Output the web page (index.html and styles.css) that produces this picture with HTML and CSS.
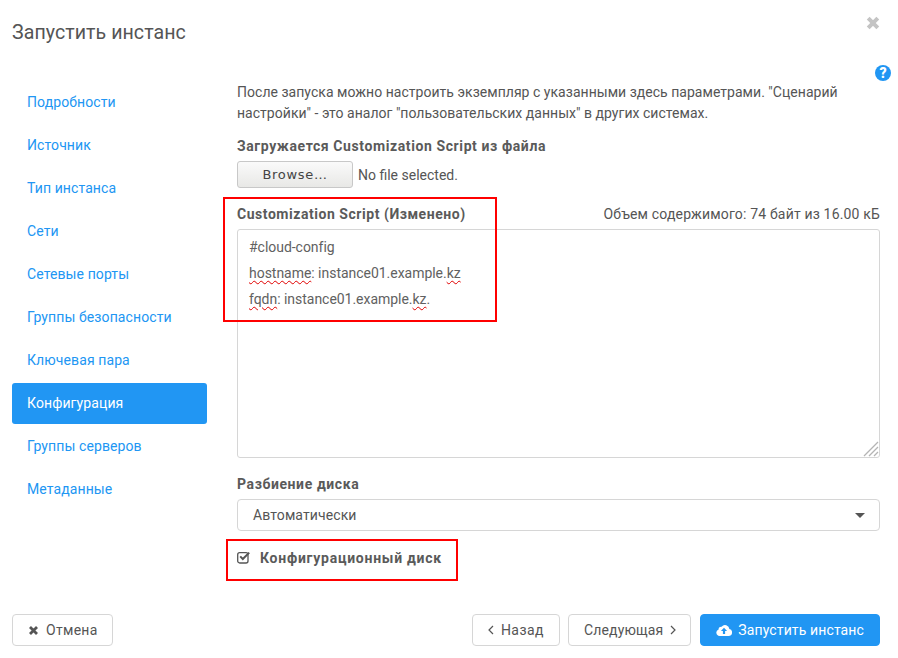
FILE: index.html
```html
<!DOCTYPE html>
<html lang="ru">
<head>
<meta charset="utf-8">
<title>Запустить инстанс</title>
<link rel="stylesheet" href="styles.css">
</head>
<body>
<div class="modal">
  <header class="modal-header">
    <h1 class="modal-title">Запустить инстанс</h1>
    <svg class="close-icon" width="14" height="14" viewBox="0 0 14 14"><path d="M2.2 2.2l9.6 9.6M11.8 2.2l-9.6 9.6" stroke="#c4c4c4" stroke-width="4" fill="none"/></svg>
  </header>
  <div class="modal-body">
    <nav class="steps">
      <a class="step">Подробности</a>
      <a class="step">Источник</a>
      <a class="step">Тип инстанса</a>
      <a class="step">Сети</a>
      <a class="step">Сетевые порты</a>
      <a class="step">Группы безопасности</a>
      <a class="step">Ключевая пара</a>
      <a class="step active">Конфигурация</a>
      <a class="step">Группы серверов</a>
      <a class="step">Метаданные</a>
    </nav>
    <main class="pane">
      <div class="help-row"><span class="help-icon">?</span></div>
      <p class="intro">После запуска можно настроить экземпляр с указанными здесь параметрами. "Сценарий настройки" - это аналог "пользовательских данных" в других системах.</p>
      <label class="field-label upload-label">Загружается Customization Script из файла</label>
      <div class="file-row">
        <span class="browse">Browse…</span>
        <span class="file-name">No file selected.</span>
      </div>
      <div class="script-head">
        <label class="field-label script-label">Customization Script (Изменено)</label>
        <span class="size-note">Объем содержимого: 74 байт из 16.00 кБ</span>
      </div>
      <div class="script-box">
        <div class="script-line">#cloud-config</div>
        <div class="script-line"><span class="typo">hostname</span>: instance01.example.<span class="typo">kz</span></div>
        <div class="script-line"><span class="typo">fqdn</span>: instance01.example.<span class="typo">kz</span>.</div>
        <svg class="grip" width="16" height="16" viewBox="0 0 16 16"><path d="M1 15L15 1M6 15l9-9M11 15l4-4" stroke="#b4b4b4" stroke-width="1.3" fill="none"/></svg>
      </div>
      <label class="field-label disk-label">Разбиение диска</label>
      <div class="select-box"><span>Автоматически</span><i class="caret"></i></div>
      <div class="check-row">
        <svg class="check-icon" width="14" height="13" viewBox="0 0 14 13"><rect x="0.7" y="1.7" width="10.3" height="10.3" rx="2" fill="none" stroke="#555" stroke-width="1.3"/><path d="M3.2 5.4l2.6 2.6 6.4-6.4" fill="none" stroke="#555" stroke-width="2"/></svg>
        <span class="check-label">Конфигурационный диск</span>
      </div>
    </main>
  </div>
  <footer class="modal-footer">
    <button class="btn btn-cancel"><svg class="btn-x" width="11" height="11" viewBox="0 0 11 11"><path d="M2 2l7 7M9 2l-7 7" stroke="#555" stroke-width="2.8" fill="none"/></svg>Отмена</button>
    <div class="footer-right">
      <button class="btn btn-back"><svg width="6" height="10" viewBox="0 0 6 10"><path d="M5 1L1 5l4 4" stroke="#555" stroke-width="1.2" fill="none"/></svg>Назад</button>
      <button class="btn btn-next">Следующая<svg width="6" height="10" viewBox="0 0 6 10"><path d="M1 1l4 4-4 4" stroke="#555" stroke-width="1.2" fill="none"/></svg></button>
      <button class="btn btn-primary"><svg width="16" height="13" viewBox="0 0 16 13"><path fill="#fff" fill-rule="evenodd" d="M3.6 12A3.4 3.4 0 0 1 2.6 5.4 2.6 2.6 0 0 1 5.6 2.7 4.4 4.4 0 0 1 13.4 5.1 3.5 3.5 0 0 1 12.6 12ZM8 3.7L4.9 6.9H6.9V9.9H9.1V6.9H11.1Z"/></svg>Запустить инстанс</button>
    </div>
  </footer>
  <div class="mark mark-script"></div>
  <div class="mark mark-disk"></div>
</div>
</body>
</html>
```
FILE: styles.css
```css
* { box-sizing: border-box; }
html, body { margin: 0; padding: 0; background: #fff; }
body {
  font-family: Roboto, "Liberation Sans", sans-serif;
  font-size: 14px;
  color: #555;
  letter-spacing: 0.1px;
}
.modal {
  position: relative;
  width: 898px;
  height: 658px;
  display: flex;
  flex-direction: column;
  overflow: hidden;
}
.modal-header {
  height: 64px;
  padding: 21px 18px 0 12px;
  display: flex;
  justify-content: space-between;
  align-items: flex-start;
}
.modal-title {
  margin: 0;
  font-size: 19.6px;
  font-weight: 400;
  line-height: 24px;
  letter-spacing: 0.05px;
  color: #555;
}
.close-icon { margin-top: -5px; }
.modal-body {
  flex: 1;
  display: flex;
  padding: 0 18px 0 12px;
}
.steps {
  width: 195px;
  padding-top: 18px;
  display: flex;
  flex-direction: column;
  gap: 2px;
}
.step {
  height: 41px;
  padding: 0 15px;
  line-height: 41px;
  color: #2196f3;
  border-radius: 3px;
  white-space: nowrap;
}
.step.active { background: #2196f3; color: #fff; }
.pane {
  margin-left: 30px;
  width: 643px;
  min-width: 0;
}
.help-row { height: 0; display: flex; justify-content: flex-end; }
.help-icon {
  width: 16px;
  height: 16px;
  margin: 1px -11px 0 0;
  flex: none;
  border-radius: 50%;
  background: #2196f3;
  color: #fff;
  font-weight: 900;
  font-size: 14px;
  line-height: 16px;
  text-align: center;
  letter-spacing: 0;
}
.intro {
  margin: 0;
  padding-top: 18px;
  line-height: 21px;
  letter-spacing: 0.03px;
}
.field-label {
  display: block;
  font-weight: 700;
  line-height: 20px;
  letter-spacing: 0.6px;
  color: #5a5a5a;
}
.upload-label { margin-top: 12px; }
.script-label { letter-spacing: 0.54px; }
.file-row {
  margin-top: 5px;
  display: flex;
  align-items: center;
  height: 27px;
  gap: 5px;
}
.browse {
  width: 116px;
  height: 27px;
  border: 1px solid #c8c8c8;
  border-radius: 3px;
  background: linear-gradient(#fafafa, #e8e8e6);
  text-align: center;
  line-height: 25px;
  font-family: "DejaVu Sans", sans-serif;
  font-size: 13px;
  letter-spacing: 0.7px;
  color: #444;
}
.file-name { letter-spacing: 0; }
.size-note { letter-spacing: 0.17px; }
.script-head {
  margin-top: 16px;
  height: 20px;
  display: flex;
  justify-content: space-between;
  align-items: center;
}
.script-box {
  position: relative;
  margin-top: 5px;
  height: 229px;
  border: 1px solid #d6d6d6;
  border-radius: 3px;
  padding: 4px 11px;
}
.script-line { line-height: 26px; letter-spacing: -0.03px; color: #616161; }
.typo { text-decoration: underline wavy #e00000 1px; text-underline-offset: 2px; }
.grip { position: absolute; right: 0; bottom: 0; }
.disk-label { margin-top: 16px; }
.select-box {
  margin-top: 5px;
  height: 32px;
  border: 1px solid #d6d6d6;
  border-radius: 4px;
  padding: 0 15px;
  line-height: 30px;
  display: flex;
  justify-content: space-between;
  align-items: center;
}
.caret {
  width: 0;
  height: 0;
  margin-right: -1px;
  border-left: 5px solid transparent;
  border-right: 5px solid transparent;
  border-top: 5px solid #555;
}
.check-row {
  margin-top: 18px;
  height: 18px;
  display: flex;
  align-items: center;
  gap: 9px;
}
.check-icon { margin-top: -2px; }
.check-label { font-weight: 700; letter-spacing: 0.75px; color: #5a5a5a; }
.modal-footer {
  height: 44px;
  padding: 0 18px 12px 12px;
  display: flex;
  justify-content: space-between;
  align-items: flex-start;
}
.footer-right { display: flex; gap: 8px; }
.btn {
  height: 32px;
  padding: 0 15px;
  display: inline-flex;
  align-items: center;
  gap: 7px;
  border: 1px solid #d6d6d6;
  border-radius: 4px;
  background: #fff;
  font: inherit;
  letter-spacing: 0.3px;
  color: #555;
}
.btn-cancel { padding-right: 14px; }
.btn-back { letter-spacing: 0.45px; }
.btn-next { letter-spacing: 0.15px; padding-right: 14px; }
.btn-primary {
  margin-left: 1px;
  background: #2196f3;
  border-color: #2196f3;
  color: #fff;
  gap: 6px;
  letter-spacing: 0.12px;
}
.mark {
  position: absolute;
  border: 2px solid #f00;
  pointer-events: none;
}
.mark-script { left: 223px; top: 197px; width: 274px; height: 125px; }
.mark-disk { left: 226px; top: 539px; width: 232px; height: 42px; }
```
